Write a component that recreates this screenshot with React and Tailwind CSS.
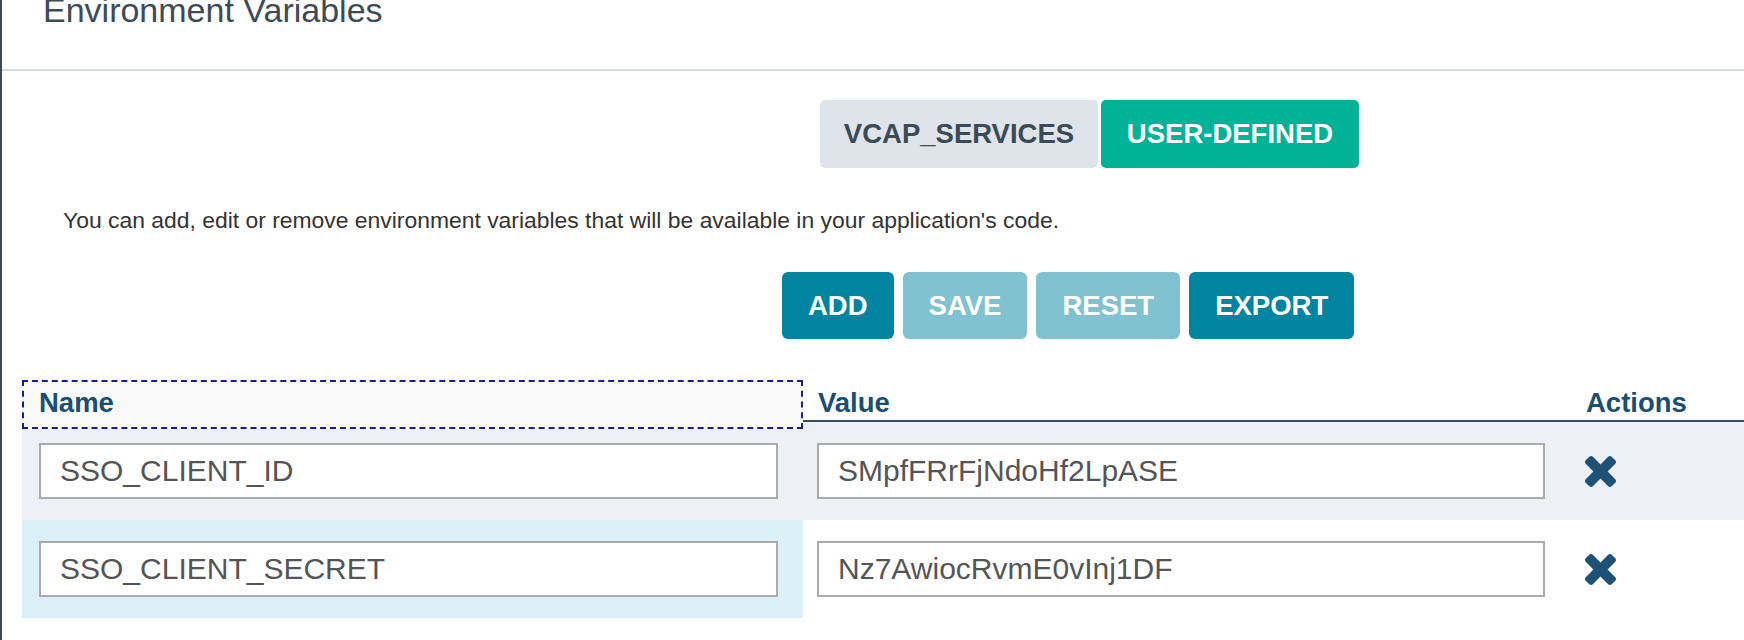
import React from "react";

/* ---------- tabs / toolbar ---------- */
const TABS = [
  { label: "VCAP_SERVICES", active: false, width: "w-[278px]" },
  { label: "USER-DEFINED", active: true, width: "w-[258px]" },
];

const ACTIONS = [
  { label: "ADD", disabled: false },
  { label: "SAVE", disabled: true },
  { label: "RESET", disabled: true },
  { label: "EXPORT", disabled: false },
];

/* ---------- rows ---------- */
const VARIABLES = [
  { name: "SSO_CLIENT_ID", value: "SMpfFRrFjNdoHf2LpASE" },
  { name: "SSO_CLIENT_SECRET", value: "Nz7AwiocRvmE0vInj1DF" },
];

const TimesIcon = () => (
  <svg width="31" height="31" viewBox="110 366 1188 1188" aria-hidden="true">
    <path
      fill="#1d5276"
      d="M1298 1322q0 40-28 68l-136 136q-28 28-68 28t-68-28l-294-294-294 294q-28 28-68 28t-68-28l-136-136q-28-28-28-68t28-68l294-294-294-294q-28-28-28-68t28-68l136-136q28-28 68-28t68 28l294 294 294-294q28-28 68-28t68 28l136 136q28 28 28 68t-28 68l-294 294 294 294q28 28 28 68z"
    />
  </svg>
);

const VarInput = ({ value, width }) => (
  <input
    className={`${width} h-[56px] border-2 border-[#ababab] bg-white px-[19px] text-[30px] text-[#555] outline-none`}
    defaultValue={value}
  />
);

const App = () => {
  return (
    <div className="min-h-[640px] overflow-hidden border-l-2 border-[#3d4b55] bg-white font-['Liberation_Sans',Arial,sans-serif]">
      {/* page title */}
      <div className="h-[71px] overflow-hidden border-b-2 border-[#d5dadd] pl-[41px]">
        <h1 className="-mt-[7px] text-[34px] font-light leading-[34px] text-[#3d4b55]">
          Environment Variables
        </h1>
      </div>

      {/* source switch */}
      <div className="mt-[29px] flex gap-[3px] pl-[818px]">
        {TABS.map((t) => (
          <button
            key={t.label}
            className={`${t.width} flex h-[68px] items-center justify-center rounded-[5px] text-[27.5px] font-bold ${
              t.active ? "bg-[#00b398] text-white" : "bg-[#dee4ea] text-[#3b4a54]"
            }`}
          >
            {t.label}
          </button>
        ))}
      </div>

      <p className="mt-[38px] pl-[61px] text-[22.9px] leading-[28px] text-[#333]">
        You can add, edit or remove environment variables that will be available in your application's code.
      </p>

      {/* toolbar */}
      <div className="mt-[38px] flex gap-[9px] pl-[780px]">
        {ACTIONS.map((a) => (
          <button
            key={a.label}
            disabled={a.disabled}
            className={`flex h-[67px] items-center rounded-[6px] px-[26px] text-[27.5px] font-bold text-white ${
              a.disabled ? "bg-[#80c2cf]" : "bg-[#00849f]"
            }`}
          >
            {a.label}
          </button>
        ))}
      </div>

      {/* variables table */}
      <div className="ml-[20px] mt-[41px]">
        <div className="grid h-[42px] grid-cols-[781px_767px_1fr] border-b-2 border-[#3d4b55] text-[27.5px] font-bold text-[#1b4f72]">
          <div className="flex items-center border-2 border-dashed border-[#1c1c8c] bg-[#f9f9f9] pb-[4px] pl-[15px]">
            Name
          </div>
          <div className="flex items-center pb-[4px] pl-[15px]">Value</div>
          <div className="flex items-center pb-[4px] pl-[16px]">Actions</div>
        </div>

        {VARIABLES.map((v, i) => (
          <div
            key={v.name}
            className={`grid h-[98px] grid-cols-[781px_767px_1fr] ${i === 0 ? "bg-[#edf1f5]" : "bg-white"}`}
          >
            <div className={`flex items-center pl-[17px] ${i === 1 ? "bg-[#dbf0f8]" : ""}`}>
              <VarInput value={v.name} width="w-[739px]" />
            </div>
            <div className="flex items-center pl-[14px]">
              <VarInput value={v.value} width="w-[728px]" />
            </div>
            <div className="flex items-center pl-[15px]">
              <TimesIcon />
            </div>
          </div>
        ))}
      </div>
    </div>
  );
};

export default App;
